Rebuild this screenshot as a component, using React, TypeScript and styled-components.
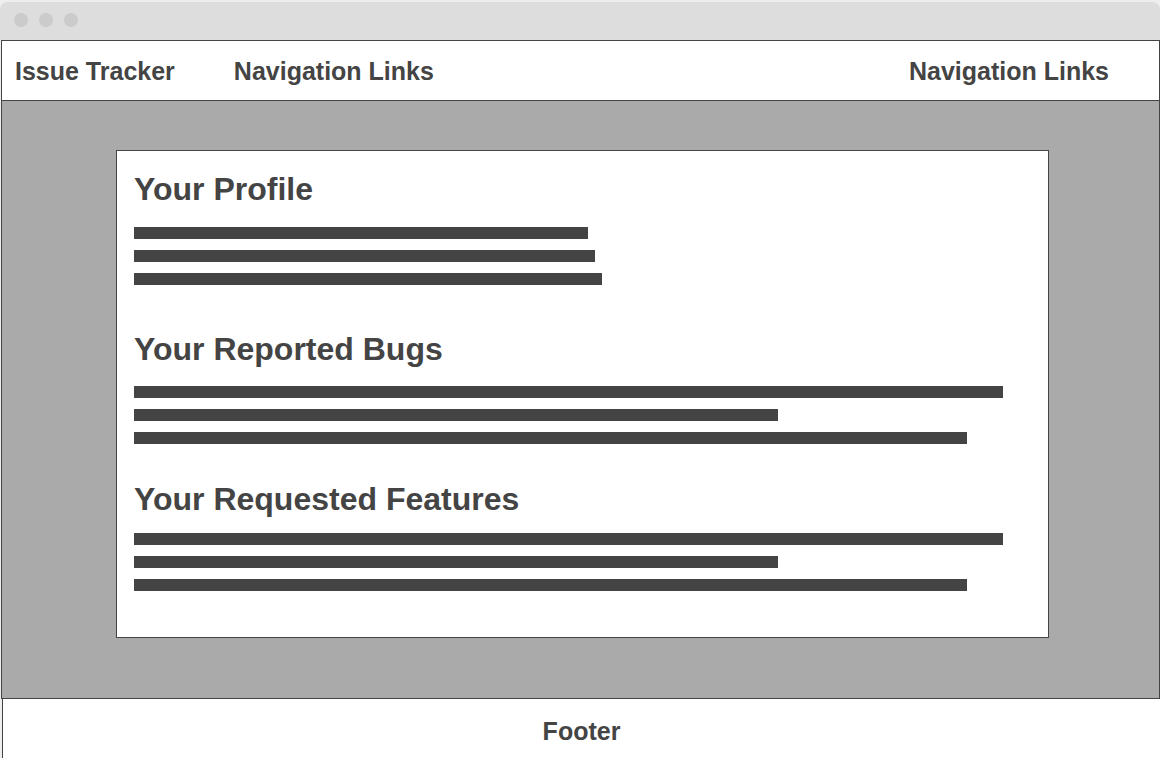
import React from 'react';
import styled, { createGlobalStyle } from 'styled-components';

const ink = '#444444';

const GlobalStyle = createGlobalStyle`
  * { box-sizing: border-box; }
  body {
    margin: 0;
    background: #eeeeee;
    color: ${ink};
    font-family: "Liberation Sans", Arial, sans-serif;
  }
`;

const Page = styled.div`
  min-height: 100vh;
  padding-top: 2px;
  display: flex;
  flex-direction: column;
`;

const TitleBar = styled.div`
  height: 38px;
  padding: 0 14px 2px;
  display: flex;
  align-items: center;
  gap: 11px;
  background: #dddddd;
  border-radius: 8px 8px 0 0;
`;

const Dot = styled.span`
  width: 14px;
  height: 14px;
  border-radius: 50%;
  background: #cbcbcb;
`;

const Nav = styled.nav`
  height: 61px;
  margin-left: 1px;
  padding: 0 50px 0 13px;
  display: flex;
  align-items: center;
  gap: 59px;
  background: #fff;
  border: 1px solid ${ink};
`;

const NavLink = styled.a<{ $end?: boolean }>`
  margin-left: ${({ $end }) => ($end ? 'auto' : '0')};
  color: inherit;
  font-size: 25px;
  line-height: 30px;
  font-weight: 700;
  text-decoration: none;
`;

const Main = styled.main`
  flex: 1;
  margin-left: 1px;
  padding: 49px 110px 60px 114px;
  display: flex;
  background: #aaaaaa;
  border: 1px solid ${ink};
  border-top: 0;
`;

const Card = styled.div`
  flex: 1;
  padding: 18px 17px 46px;
  display: flex;
  flex-direction: column;
  background: #fff;
  border: 1px solid ${ink};
`;

const Section = styled.section<{ $after: number }>`
  margin-bottom: ${({ $after }) => $after}px;
`;

const Heading = styled.h2<{ $gap: number }>`
  margin: 0 0 ${({ $gap }) => $gap}px;
  font-size: 32px;
  line-height: 40px;
`;

const Lines = styled.div`
  display: flex;
  flex-direction: column;
  gap: 11px;
`;

const Line = styled.div<{ $width: number }>`
  width: ${({ $width }) => $width}px;
  max-width: 100%;
  height: 12px;
  background: ${ink};
`;

const Footer = styled.footer`
  height: 59px;
  margin-left: 2px;
  padding-top: 4px;
  display: flex;
  align-items: center;
  justify-content: center;
  background: #fff;
  border-left: 1px solid ${ink};
  font-size: 25px;
  line-height: 30px;
  font-weight: 700;
`;

const sections = [
  { title: 'Your Profile', gap: 18, after: 44, lines: [454, 461, 468] },
  { title: 'Your Reported Bugs', gap: 17, after: 35, lines: [869, 644, 833] },
  { title: 'Your Requested Features', gap: 14, after: 0, lines: [869, 644, 833] },
];

export default function App() {
  return (
    <>
      <GlobalStyle />
      <Page>
        <TitleBar>
          <Dot />
          <Dot />
          <Dot />
        </TitleBar>
        <Nav>
          <NavLink href="#home">Issue Tracker</NavLink>
          <NavLink href="#browse">Navigation Links</NavLink>
          <NavLink href="#account" $end>Navigation Links</NavLink>
        </Nav>
        <Main>
          <Card>
            {sections.map(({ title, gap, after, lines }) => (
              <Section key={title} $after={after}>
                <Heading $gap={gap}>{title}</Heading>
                <Lines>
                  {lines.map((width) => (
                    <Line key={width} $width={width} />
                  ))}
                </Lines>
              </Section>
            ))}
          </Card>
        </Main>
        <Footer>Footer</Footer>
      </Page>
    </>
  );
}
